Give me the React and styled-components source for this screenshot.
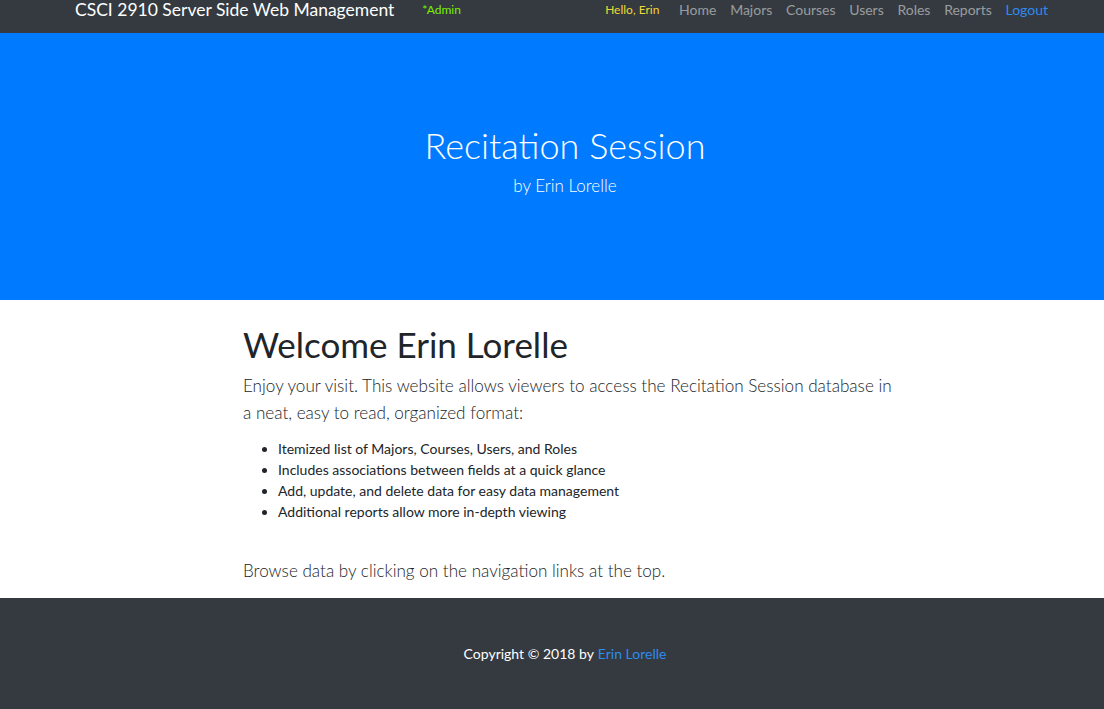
import React from "react";
import styled, { createGlobalStyle } from "styled-components";

const GlobalStyle = createGlobalStyle`
  html, body {
    margin: 0;
    padding: 0;
    background: #ffffff;
    font-family: Lato, "Open Sans", Arial, sans-serif;
    color: #212529;
  }
`;

const Page = styled.div`
  width: 1104px;
  min-height: 709px;
  display: flex;
  flex-direction: column;
  overflow: hidden;
`;

const Navbar = styled.nav`
  height: 33px;
  background: #343a40;
  display: flex;
  align-items: flex-start;
  padding: 0 56px 0 75px;
  box-sizing: border-box;
`;

const Brand = styled.span`
  color: #ffffff;
  font-size: 17.5px;
  line-height: 20px;
`;

const AdminTag = styled.span`
  color: #7cf000;
  font-size: 12px;
  line-height: 20px;
  margin-left: 28px;
`;

const NavRight = styled.div`
  margin-left: auto;
  display: flex;
  align-items: flex-start;
  gap: 13.7px;
`;

const Hello = styled.span`
  color: #f2d635;
  font-size: 12px;
  line-height: 20px;
  margin-right: 6px;
`;

const NavLink = styled.a`
  color: ${(p) => (p.$accent ? "#2f8bef" : "rgba(255, 255, 255, 0.5)")};
  font-size: 14px;
  line-height: 20px;
  text-decoration: none;
`;

const Hero = styled.header`
  height: 267px;
  background: #007bff;
  color: #ffffff;
  display: flex;
  flex-direction: column;
  align-items: center;
  padding-top: 90px;
  padding-left: 26px;
  box-sizing: border-box;
`;

const HeroTitle = styled.h1`
  margin: 0;
  font-size: 36px;
  font-weight: 300;
  line-height: 44px;
`;

const HeroSub = styled.p`
  margin: 7px 0 0;
  font-size: 17px;
  font-weight: 300;
  line-height: 24px;
`;

const Main = styled.main`
  height: 298px;
  padding: 20px 0 0 243px;
  box-sizing: border-box;
`;

const Welcome = styled.h2`
  margin: 0;
  font-size: 35px;
  font-weight: 400;
  line-height: 48px;
  color: #212529;
`;

const Lead = styled.p`
  margin: ${(p) => p.$margin || "4px 0 0"};
  width: 652px;
  font-size: 17.1px;
  font-weight: 300;
  line-height: 27px;
  color: #212529;
`;

const List = styled.ul`
  margin: 12px 0 0;
  padding-left: 35px;
  font-size: 14px;
  line-height: 21px;
  color: #212529;
`;

const Footer = styled.footer`
  flex: 1;
  min-height: 111px;
  background: #343a40;
  color: #ffffff;
  display: flex;
  align-items: center;
  justify-content: center;
  padding: 0 0 12px 26px;
  font-size: 14px;
`;

const FooterLink = styled.a`
  color: #2f8bef;
  text-decoration: none;
  margin-left: 4px;
`;

const links = ["Home", "Majors", "Courses", "Users", "Roles", "Reports"];

const features = [
  "Itemized list of Majors, Courses, Users, and Roles",
  "Includes associations between fields at a quick glance",
  "Add, update, and delete data for easy data management",
  "Additional reports allow more in-depth viewing",
];

export default function App() {
  return (
    <Page>
      <GlobalStyle />
      <Navbar>
        <Brand>CSCI 2910 Server Side Web Management</Brand>
        <AdminTag>*Admin</AdminTag>
        <NavRight>
          <Hello>Hello, Erin</Hello>
          {links.map((l) => (
            <NavLink key={l} href="#">
              {l}
            </NavLink>
          ))}
          <NavLink $accent href="#">
            Logout
          </NavLink>
        </NavRight>
      </Navbar>
      <Hero>
        <HeroTitle>Recitation Session</HeroTitle>
        <HeroSub>by Erin Lorelle</HeroSub>
      </Hero>
      <Main>
        <Welcome>Welcome Erin Lorelle</Welcome>
        <Lead>
          Enjoy your visit. This website allows viewers to access the
          Recitation Session database in a neat, easy to read, organized
          format:
        </Lead>
        <List>
          {features.map((f) => (
            <li key={f}>{f}</li>
          ))}
        </List>
        <Lead $margin="35px 0 0">
          Browse data by clicking on the navigation links at the top.
        </Lead>
      </Main>
      <Footer>
        Copyright © 2018 by<FooterLink href="#">Erin Lorelle</FooterLink>
      </Footer>
    </Page>
  );
}
